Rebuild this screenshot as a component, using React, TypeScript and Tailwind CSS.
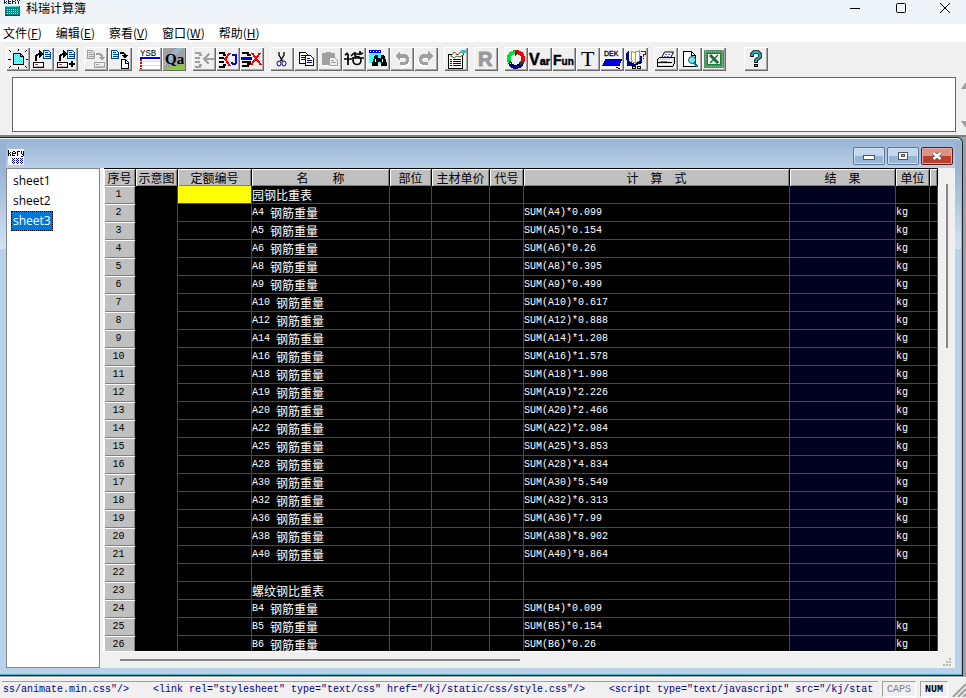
import { ReactNode, useState } from "react";

type Row = { code?: string; name?: string; formula?: string; unit?: string };

const steel = (code: string, factor: string, unit = "kg"): Row => ({
  code,
  name: "钢筋重量",
  formula: `SUM(${code})*${factor}`,
  unit,
});

const rows: Row[] = [
  { name: "园钢比重表" },
  steel("A4", "0.099"),
  steel("A5", "0.154"),
  steel("A6", "0.26"),
  steel("A8", "0.395"),
  steel("A9", "0.499"),
  steel("A10", "0.617"),
  steel("A12", "0.888"),
  steel("A14", "1.208"),
  steel("A16", "1.578"),
  steel("A18", "1.998"),
  steel("A19", "2.226"),
  steel("A20", "2.466"),
  steel("A22", "2.984"),
  steel("A25", "3.853"),
  steel("A28", "4.834"),
  steel("A30", "5.549"),
  steel("A32", "6.313"),
  steel("A36", "7.99"),
  steel("A38", "8.902"),
  steel("A40", "9.864"),
  {},
  { name: "螺纹钢比重表" },
  steel("B4", "0.099", ""),
  steel("B5", "0.154"),
  steel("B6", "0.26"),
];

const columns = [
  { title: "序号", width: "w-8" },
  { title: "示意图", width: "w-[42px]" },
  { title: "定额编号", width: "w-[74px]" },
  { title: "名　　称", width: "w-[138px]" },
  { title: "部位", width: "w-[42px]" },
  { title: "主材单价", width: "w-[58px]" },
  { title: "代号", width: "w-[34px]" },
  { title: "计　算　式", width: "" },
  { title: "结　果", width: "w-[106px]" },
  { title: "单位", width: "w-[34px]" },
  { title: "", width: "w-2" },
];

const menus = [
  ["文件", "F"],
  ["编辑", "E"],
  ["察看", "V"],
  ["窗口", "W"],
  ["帮助", "H"],
];

const Icon = ({ children }: { children: ReactNode }) => (
  <svg viewBox="0 0 24 24" className="block h-6 w-6" fill="none" shapeRendering="crispEdges" aria-hidden="true">
    {children}
  </svg>
);

const Drive = ({ x, y, off }: { x: number; y: number; off?: boolean }) => (
  <g>
    <rect x={x + 0.5} y={y + 0.5} width="10" height="5" fill={off ? "#eee" : "#fff"} stroke={off ? "#a0a0a0" : "#000"} />
    <path d={`M${x + 2} ${y + 2.5}h3`} stroke={off ? "#a0a0a0" : "#d33"} />
    <path d={`M${x + 2} ${y + 4.5}h8`} stroke="#bbb" />
  </g>
);

const BlueDoc = ({ x, y, off }: { x: number; y: number; off?: boolean }) => {
  const c = off ? "#a0a0a0" : "#0040a0";
  return (
    <g>
      <path d={`M${x + 0.5} ${y + 0.5}h5l2 2v6h-7z`} fill={off ? "#ddd" : "#bff"} stroke={c} />
      <path d={`M${x + 2} ${y + 2.5}h3M${x + 2} ${y + 4.5}h5M${x + 2} ${y + 6.5}h5`} stroke={c} />
    </g>
  );
};

const Undo = () => (
  <>
    <path d="M7 10h7c6 0 6 9 0 9h-3" stroke="#fff" strokeWidth="3" />
    <path d="M5 9l5-5v3h4c7 0 7 11 0 11h-4v-3h4c3 0 3-4 0-4h-4v3z" fill="#a0a0a0" />
  </>
);

const ExprLines = ({ off }: { off?: boolean }) => (
  <path
    d="M3 5.500h5v2h2M3 10.500h5M3 14.500h5M3 19.500h5v-2h2"
    stroke={off ? "#a0a0a0" : "#000"}
    strokeWidth="2"
  />
);

const icons: Record<string, ReactNode> = {
  fresh: (
    <>
      <path d="M7.500 6.500h7l3 3v8h-10z" fill="#6ff" stroke="#000" />
      <path d="M9 8.500h5M9 10.500h7M9 12.500h7M9 14.500h7" stroke="#5cc" strokeDasharray="1 1" />
      <path d="M14.500 6v3.500h3" stroke="#000" />
      <path d="M3 3l2 2M12.500 2v2M21 3l-2 2M2 12.500h3M20 12.500h2M3 21l2-2M12.500 20v2M21 21l-2-2" stroke="#000" />
    </>
  ),
  open: (
    <>
      <path d="M6 14v-3c0-2 1-4 4-4" stroke="#000" strokeWidth="2" />
      <path d="M9 3l4 4-4 4z" fill="#000" />
      <BlueDoc x={13} y={3} />
      <Drive x={3} y={15} />
    </>
  ),
  append: (
    <>
      <path d="M6 14v-3c0-2 1-4 4-4" stroke="#000" strokeWidth="2" />
      <path d="M9 3l4 4-4 4z" fill="#000" />
      <BlueDoc x={13} y={3} />
      <Drive x={3} y={15} />
      <path d="M15 17h6M18 14v6" stroke="#000" strokeWidth="2" />
    </>
  ),
  save: (
    <>
      <BlueDoc x={3} y={3} off />
      <path d="M12 7h3c2 0 3 1 3 4" stroke="#a0a0a0" strokeWidth="2" />
      <path d="M14 10h7l-3 4z" fill="#a0a0a0" />
      <Drive x={10} y={15} off />
    </>
  ),
  saveAs: (
    <>
      <BlueDoc x={3} y={3} />
      <path d="M12 6h2c2 0 3 1 3 3" stroke="#000" strokeWidth="2" />
      <path d="M13 8h7l-3 4z" fill="#000" />
      <path d="M13.500 12.500h4l3 3v6h-7z" fill="#fff" stroke="#000" />
      <path d="M17 13v3h3" stroke="#000" />
    </>
  ),
  ysb: (
    <>
      <path d="M1 1h21v21H1z" fill="#fff" />
      <text x="2" y="9" fontFamily="Liberation Mono, monospace" fontSize="9" fill="#000">YSB</text>
      <path d="M2 11h20" stroke="#00c" strokeWidth="2" />
      <path d="M2 14.500h20M2 18.500h20" stroke="#ddd" />
      <path d="M3 12v10" stroke="#d00" strokeWidth="2" strokeDasharray="2 1" />
    </>
  ),
  qa: (
    <>
      <path d="M1 1h21v21H1z" fill="#a0a0a4" />
      <path d="M1 20V14L14 1h8z" fill="#9bc4e2" opacity=".6" />
      <path d="M1 22l9-3 6 0 6-4v7z" fill="#8cc63f" />
      <text x="3" y="17" fontFamily="Liberation Serif, serif" fontWeight="700" fontSize="15" fill="#000">Qa</text>
    </>
  ),
  insert: (
    <>
      <ExprLines off />
      <path d="M12 12h10M17 7l-5 5 5 5" stroke="#a0a0a0" strokeWidth="2" />
    </>
  ),
  join: (
    <>
      <ExprLines />
      <path d="M14 6l-5 6 5 7" stroke="#e00" strokeWidth="2" />
      <path d="M16 8h4v7c0 3-4 3-4 0" stroke="#00d" strokeWidth="2" />
    </>
  ),
  remove: (
    <>
      <path d="M2 6h6v2h3M2 19h6v-2h3M2 15h9" stroke="#000" strokeWidth="2" />
      <path d="M1 11.500h11" stroke="#00d" strokeWidth="3" />
      <path d="M12 6l9 12M20 6l-9 12" stroke="#e00" strokeWidth="2" />
    </>
  ),
  cut: (
    <>
      <path d="M9 5v3l3.500 6M14 5v3l-3.500 6" stroke="#000" shapeRendering="auto" strokeWidth="1.300" />
      <ellipse cx="9" cy="16.500" rx="2" ry="2.500" stroke="#000080" shapeRendering="auto" />
      <ellipse cx="14" cy="16.500" rx="2" ry="2.500" stroke="#000080" shapeRendering="auto" />
    </>
  ),
  copy: (
    <>
      <path d="M5.500 5.500h6l3 3v8h-9z" fill="#fff" stroke="#000" />
      <path d="M7 8.500h4M7 10.500h4M7 12.500h4" stroke="#000" />
      <path d="M11.500 8.500h5l3 3v7h-8z" fill="#fff" stroke="#000080" />
      <path d="M13 11.500h3M13 13.500h5M13 15.500h5" stroke="#000080" />
    </>
  ),
  paste: (
    <>
      <path d="M4 6h4V5h5v1h4v5h-5v7H4z" fill="#a0a0a0" />
      <path d="M11.500 10.500h5l3 3v5h-8z" fill="#eee" stroke="#a0a0a0" />
      <path d="M13 13.500h3M13 15.500h5" stroke="#a0a0a0" />
      <path d="M5 18.500h6M12 19.500h9" stroke="#fff" />
    </>
  ),
  symbols: (
    <g shapeRendering="auto">
      <path d="M3 8l3-2M2 12h8M6 7v11M9 9l3-3M12 7h8M13 5v4M18 4v3l3-1M10 11h12" stroke="#000" strokeWidth="1.700" />
      <circle cx="15" cy="13.500" r="4" stroke="#000" strokeWidth="1.700" />
    </g>
  ),
  find: (
    <>
      <path d="M3 3h12v13H3z" fill="#3ff" />
      <path d="M3 4.500h12" stroke="#00c" strokeWidth="3" />
      <path d="M4 4.500h11" stroke="#fff" strokeDasharray="1 2" />
      <path d="M9 8h3v3h3V8h3l3 8v3h-6v-4h-3v4H6v-3z" fill="#000" />
      <path d="M9.500 12v3M16.500 12v3" stroke="#fff" />
    </>
  ),
  undo: <Undo />,
  redo: (
    <g transform="translate(24 0) scale(-1 1)">
      <Undo />
    </g>
  ),
  props: (
    <>
      <path d="M4.500 7.500h14v14h-14z" fill="#fff" stroke="#000" />
      <path d="M6 12.500h2M9 12.500h8M6 14.500h2M9 14.500h8M6 16.500h2M9 16.500h8M6 18.500h2M9 18.500h8" stroke="#000080" />
      <path d="M6.500 9l4-4 3 3 3-3h3v3l-4 2-3-1-2 2z" fill="#ffc" stroke="#000" shapeRendering="auto" strokeWidth=".7" />
      <path d="M17 3h5v3h-5z" fill="#3bd" />
    </>
  ),
  bigR: (
    <>
      <text x="5" y="20" fontFamily="Liberation Sans, sans-serif" fontWeight="700" fontSize="20" fill="#fff">R</text>
      <text x="4" y="19" fontFamily="Liberation Sans, sans-serif" fontWeight="700" fontSize="20" fill="#999" stroke="#999">R</text>
    </>
  ),
  cycle: (
    <g strokeWidth="4">
      <path d="M12 5a7 7 0 0 1 6 11" stroke="#e00" />
      <path d="M18 16a7 7 0 0 1-12 1" stroke="#000080" />
      <path d="M6 16A7 7 0 0 1 12 5" stroke="#0d3" />
      <path d="M11 3l3 3-3 3zM20 15l-3 4-2-4zM4 17l2-4 2 3z" fill="#333" strokeWidth="0" />
    </g>
  ),
  vars: (
    <text x="1" y="18" fontFamily="Liberation Sans, sans-serif" fontWeight="700" fill="#000" stroke="#000" strokeWidth=".5">
      <tspan fontSize="16">V</tspan>
      <tspan fontSize="11">ar</tspan>
    </text>
  ),
  funs: (
    <text x="1" y="18" fontFamily="Liberation Sans, sans-serif" fontWeight="700" fill="#000" stroke="#000" strokeWidth=".4">
      <tspan fontSize="14">F</tspan><tspan fontSize="10">un</tspan>
    </text>
  ),
  text: <text x="5" y="19" fontFamily="Liberation Serif, serif" fontSize="22" fill="#000">T</text>,
  dek: (
    <>
      <path d="M2 1h20v21H2z" fill="#f8f8f8" />
      <text x="4" y="9" fontFamily="Liberation Sans, sans-serif" fontSize="7" fill="#000" stroke="#000" strokeWidth=".3">DEK</text>
      <path d="M6 12h16l-3 6H3z" fill="#00d" stroke="#000080" />
      <path d="M3 18.500h17" stroke="#000" />
      <path d="M16 20.500h2M18 21.500h2" stroke="#000" />
    </>
  ),
  book: (
    <>
      <path d="M2 6l3-2v10l6 3 5-3V9h2v7l-7 3H3z" fill="#000080" />
      <path d="M7 4l4 2v10l-4-2z" fill="#ffc" stroke="#997" />
      <path d="M11 5l4-1v10l-4 2z" fill="#fff" stroke="#997" />
      <path d="M17 4.500h4v2.500h-2v3M19 11v1" stroke="#a00" />
      <circle cx="10" cy="20.500" r="1.500" stroke="#000" />
      <circle cx="15" cy="20.500" r="1.500" stroke="#000" />
    </>
  ),
  print: (
    <>
      <path d="M7.500 11l3-6h9l-3 6z" fill="#fff" stroke="#000" shapeRendering="auto" />
      <path d="M11 7.500h6M10 9.500h6" stroke="#66c" strokeDasharray="2 1" />
      <path d="M3.500 12.500l2-2h15v6l-2 3h-15z" fill="#ddd" stroke="#000" />
      <path d="M4 13.500h14M4 17.500h14" stroke="#fff" />
      <path d="M4 15.500h14" stroke="#000" />
      <path d="M7 14.500h6" stroke="#c44" />
    </>
  ),
  preview: (
    <>
      <path d="M5.500 4.500h8l4 4v11h-12z" fill="#fff" stroke="#000" />
      <path d="M13.500 4v4h4" stroke="#000" />
      <circle cx="14" cy="13" r="3.500" fill="#6ee" stroke="#357" shapeRendering="auto" />
      <path d="M16 16l4 4" stroke="#178" strokeWidth="2" />
    </>
  ),
  excel: (
    <>
      <path d="M2 3h20v18H2z" fill="#4f8a64" />
      <path d="M3.500 3v18M20.500 3v18" stroke="#9b9" strokeDasharray="1 1" />
      <path d="M3 4.500h18M3 19.500h18" stroke="#9b9" strokeDasharray="1 1" />
      <path d="M5.500 6.500h13v11h-13z" fill="#efe" stroke="#183" />
      <path d="M8 8l8 8" stroke="#264" strokeWidth="3" shapeRendering="auto" />
      <path d="M16 8l-8 8" stroke="#264" strokeWidth="1.500" shapeRendering="auto" />
    </>
  ),
  help: (
    <>
      <path d="M8 10V7l2-2h4l2 2v3l-4 3v3" stroke="#000" strokeWidth="3.500" shapeRendering="auto" />
      <path d="M8 9V7l2-2h4l2 2v3l-4 3v2" stroke="#1bc" strokeWidth="1.800" shapeRendering="auto" />
      <path d="M10.500 17.500h3v2h-3z" fill="#1bc" stroke="#000" />
    </>
  ),
};

const toolGroups: { id: string; label: string }[][] = [
  [
    { id: "fresh", label: "新建" },
    { id: "open", label: "打开" },
    { id: "append", label: "追加" },
  ],
  [
    { id: "save", label: "保存" },
    { id: "saveAs", label: "另存为" },
  ],
  [
    { id: "ysb", label: "预算表" },
    { id: "qa", label: "定额" },
  ],
  [
    { id: "insert", label: "插入行" },
    { id: "join", label: "合并行" },
    { id: "remove", label: "删除行" },
  ],
  [
    { id: "cut", label: "剪切" },
    { id: "copy", label: "复制" },
    { id: "paste", label: "粘贴" },
    { id: "symbols", label: "符号" },
    { id: "find", label: "查找" },
    { id: "undo", label: "撤消" },
    { id: "redo", label: "重做" },
  ],
  [{ id: "props", label: "属性" }],
  [{ id: "bigR", label: "结果" }],
  [
    { id: "cycle", label: "重算" },
    { id: "vars", label: "变量" },
    { id: "funs", label: "函数" },
    { id: "text", label: "文本" },
    { id: "dek", label: "定额库" },
    { id: "book", label: "手册" },
  ],
  [
    { id: "print", label: "打印" },
    { id: "preview", label: "打印预览" },
    { id: "excel", label: "导出" },
  ],
];

const ToolButton = ({ id, label }: { id: string; label: string }) => (
  <button
    type="button"
    aria-label={label}
    className="h-6 w-6 bg-[#f0f0f0] shadow-[inset_1px_1px_#fff,inset_-1px_-1px_#696969,inset_-2px_-2px_#a8a8a8]"
  >
    <Icon>{icons[id]}</Icon>
  </button>
);

const TitleBar = () => (
  <header className="flex h-6 shrink-0 items-start justify-between bg-[#eff4f9] pl-1">
    <div className="flex items-start gap-[6px]">
      <svg viewBox="0 0 16 16" className="h-4 w-4" shapeRendering="crispEdges" aria-hidden="true">
        <path d="M.5 0v4M1 2.500h1M2.500 1v1M2.500 3v1M4.500 0v4M5 1.500h2M5 3.500h2M8.500 0v4M9 1.500h2M11.500 0v1M11.500 2v2M13.500 0v1M15.500 0v1M14.500 1v3" stroke="#223" fill="none" />
        <path d="M1 6h15v10H1z" fill="#088" />
        <path d="M1 6h14v1H1z" fill="#4dd" />
        <path d="M3 9.500h12M3 11.500h12M3 13.500h12" stroke="#5ff" strokeDasharray="1 1" />
        <path d="M1 15h15v1H1z" fill="#044" />
      </svg>
      <h1 className="text-[12px] leading-4">科瑞计算簿</h1>
    </div>
    <div className="flex h-4">
      <button type="button" aria-label="最小化" className="flex w-[46px] items-center justify-center">
        <svg viewBox="0 0 10 10" className="h-[10px] w-[10px]" stroke="#000"><path d="M0 5.500h10" /></svg>
      </button>
      <button type="button" aria-label="最大化" className="flex w-[46px] items-center justify-center">
        <svg viewBox="0 0 10 10" className="h-[10px] w-[10px]" stroke="#000" fill="none"><rect x=".5" y=".5" width="9" height="9" rx="1" /></svg>
      </button>
      <button type="button" aria-label="关闭" className="flex w-[42px] items-center justify-center">
        <svg viewBox="0 0 10 10" className="h-[10px] w-[10px]" stroke="#000"><path d="M0 0l10 10M10 0L0 10" /></svg>
      </button>
    </div>
  </header>
);

const ChildTitleBar = () => (
  <div className="flex h-[29px] shrink-0 items-end justify-between bg-linear-to-b from-[#99b4d3] to-[#b7d1ea] pr-[2px] pb-[3px] pl-[2px]">
    <svg viewBox="0 0 16 16" className="h-4 w-4" shapeRendering="crispEdges" role="img" aria-label="kery">
      <path d="M0 0h16v16H0z" fill="#fff" />
      <path d="M.5 1v6M1 4.500h1M2.500 3v1M2.500 5v2M4.500 3v4M5 2.500h2M5 4.500h2M7.500 3v2M5 6.500h2M9.500 2v5M10 2.500h2M13.500 2v3M15.500 2v5M14 5.500h1M13 7.500h2" stroke="#000" fill="none" />
      <path d="M4 9.500h11M4 11.500h11M4 13.500h11" stroke="#00a" strokeDasharray="1 1" />
      <path d="M5 10.500h10M5 12.500h10M5 14.500h10" stroke="#00a" strokeDasharray="1 3" />
    </svg>
    <div className="flex gap-[2px]">
      <button type="button" aria-label="最小化窗口" className="flex h-[18px] w-8 items-center justify-center rounded-[2px] border border-[#58759a] bg-linear-to-b from-[#c3d8ed] from-50% to-[#98b5d4] to-50% shadow-[inset_0_0_0_1px_#cfe0f2]">
        <svg viewBox="0 0 12 6" className="mt-1 h-[6px] w-3" shapeRendering="crispEdges"><rect x=".5" y=".5" width="11" height="4" fill="#fff" stroke="#555" /></svg>
      </button>
      <button type="button" aria-label="最大化窗口" className="flex h-[18px] w-8 items-center justify-center rounded-[2px] border border-[#58759a] bg-linear-to-b from-[#c3d8ed] from-50% to-[#98b5d4] to-50% shadow-[inset_0_0_0_1px_#cfe0f2]">
        <svg viewBox="0 0 12 8" className="h-2 w-3" fill="#fff" stroke="#555" shapeRendering="crispEdges"><rect x="1.500" y=".5" width="9" height="7" /><rect x="4.500" y="2.500" width="3" height="2" fill="#9bd" /></svg>
      </button>
      <button type="button" aria-label="关闭窗口" className="flex h-[18px] w-8 items-center justify-center rounded-[2px] border border-[#5c1d18] bg-linear-to-b from-[#dd9384] from-50% to-[#b8402d] to-50% shadow-[inset_0_0_0_1px_#e5aa9d]">
        <svg viewBox="0 0 12 10" className="h-[10px] w-3"><path d="M2.500 2l7 6M9.500 2l-7 6" stroke="#555" strokeWidth="4" /><path d="M2.500 2l7 6M9.500 2l-7 6" stroke="#fff" strokeWidth="2.500" /></svg>
      </button>
    </div>
  </div>
);

const cell = "border-r border-b border-[#484848] p-0";
const cellText = "flex h-[17px] items-center overflow-hidden whitespace-pre leading-[17px]";
const mono = "font-['Liberation_Mono',monospace] text-[10px]";

const Sheet = () => (
  <table className="w-full table-fixed border-separate border-spacing-0 bg-black text-[12px] text-white">
    <thead>
      <tr>
        {columns.map((col, i) => (
          <th
            key={i}
            scope="col"
            className={`${col.width} h-[18px] border-t border-r border-black bg-[#c0c0c0] p-0 text-center leading-[17px] font-normal whitespace-nowrap text-black shadow-[inset_1px_1px_#fff,inset_-1px_-1px_#808080]`}
          >
            {col.title}
          </th>
        ))}
      </tr>
    </thead>
    <tbody>
      {rows.map((row, i) => (
        <tr key={i}>
          <th
            scope="row"
            className={`${mono} h-[18px] border-r border-black bg-[#c0c0c0] p-0 pr-[2px] text-center leading-[18px] font-normal text-black shadow-[inset_1px_1px_#fff,inset_-1px_-1px_#808080]`}
          >
            {i + 1}
          </th>
          <td className="border-r border-[#484848] p-0" />
          <td className={i === 0 ? `${cell} bg-[#ffff00]` : cell} />
          <td className={cell}>
            <div className={cellText}>
              {row.code && <span className={mono}>{row.code + " "}</span>}
              {row.name}
            </div>
          </td>
          <td className={cell} />
          <td className={cell} />
          <td className={cell} />
          <td className={cell}>
            <div className={`${cellText} ${mono}`}>{row.formula}</div>
          </td>
          <td className={`${cell} bg-[#000020]`} />
          <td className={cell}>
            <div className={`${cellText} ${mono}`}>{row.unit}</div>
          </td>
          <td className={cell} />
        </tr>
      ))}
    </tbody>
  </table>
);

const App = () => {
  const [active, setActive] = useState("sheet3");
  const [expression, setExpression] = useState("");

  return (
    <div className="flex h-screen flex-col overflow-hidden bg-[#f0f0f0] font-['Noto_Sans_CJK_SC',sans-serif] text-[12px] text-black">
      <TitleBar />

      <nav className="flex h-[18px] shrink-0 gap-[14px] bg-white pl-[3px]">
        {menus.map(([name, key]) => (
          <button key={key} type="button" className="leading-[18px] whitespace-nowrap">
            {name}(<u>{key}</u>)
          </button>
        ))}
      </nav>

      <div role="toolbar" className="flex shrink-0 gap-[6px] px-[6px] pt-[5px] pb-[6px]">
        {toolGroups.map((group, i) => (
          <div key={i} className="flex">
            {group.map((tool) => (
              <ToolButton key={tool.id} {...tool} />
            ))}
          </div>
        ))}
        <div className="ml-3 flex">
          <ToolButton id="help" label="帮助" />
        </div>
      </div>

      <div className="flex shrink-0 pb-[3px] pl-3">
        <textarea
          aria-label="计算式"
          value={expression}
          onChange={(e) => setExpression(e.target.value)}
          className="block h-[55px] flex-1 resize-none border border-[#646464] bg-white px-1 outline-none"
        />
        <svg viewBox="0 0 5 55" className="ml-[5px] h-[55px] w-[5px]" fill="#a0a0a0" aria-hidden="true">
          <path d="M0 12l4-6h1v6zM0 44h5v6H4z" />
        </svg>
      </div>

      <main className="flex min-h-0 flex-1 border-t-2 border-[#808080] bg-[#a0a0a0] pr-[3px] pb-px">
        <section className="flex min-w-0 flex-1 flex-col rounded-tr-md border-t border-r border-b border-[#222] bg-[#b9d1ea]">
          <div className="flex min-h-0 flex-1 flex-col rounded-tr-md border-t border-r border-b border-t-[#e8f3fc] border-r-[#5fd3ee] border-b-[#4fb5c8] bg-[linear-gradient(#99b4d3_30px,#d3e3f3_110px,#b9d1ea_110px)] pr-[6px] pb-[6px] pl-[6px]">
            <ChildTitleBar />
            <div className="flex min-h-0 flex-1 bg-[#f0f0f0]">
              <ul className="w-[94px] shrink-0 border border-[#828790] bg-white py-[2px] pl-1 font-['Open_Sans',sans-serif] text-[12px]">
                {["sheet1", "sheet2", "sheet3"].map((name) => (
                  <li key={name} className="flex h-5">
                    <button
                      type="button"
                      onClick={() => setActive(name)}
                      className={
                        name === active
                          ? "border border-dotted border-black bg-[#0078d7] px-px text-white"
                          : "border border-transparent px-px"
                      }
                    >
                      {name}
                    </button>
                  </li>
                ))}
              </ul>
              <div className="flex min-w-0 flex-1 flex-col pl-[3px]">
                <div className="flex min-h-0 flex-1">
                  <div className="min-w-0 flex-1 overflow-hidden border-b border-l border-white">
                    <Sheet />
                  </div>
                  <div className="flex w-[17px] justify-center pt-4">
                    <div className="h-[164px] w-[2px] bg-[#858585]" />
                  </div>
                </div>
                <div className="flex h-4 shrink-0 items-center justify-between pl-[17px]">
                  <div className="h-[2px] w-[400px] bg-[#858585]" />
                  <svg viewBox="0 0 9 9" className="mt-1 mr-[3px] h-[9px] w-[9px]" fill="#b8b8b8" aria-hidden="true">
                    <path d="M6 0h2v2H6zM3 3h2v2H3zM6 3h2v2H6zM0 6h2v2H0zM3 6h2v2H3zM6 6h2v2H6z" />
                  </svg>
                </div>
              </div>
            </div>
          </div>
        </section>
      </main>

      <footer className="flex h-[21px] shrink-0 gap-1 border-t border-white pt-[3px] font-['Liberation_Mono',monospace] text-[10px] leading-[15px]">
        <p className="ml-[2px] min-w-0 flex-1 overflow-hidden border-t border-[#a0a0a0] pl-px whitespace-pre text-[#000080]">
          {`ss/animate.min.css"/>    <link rel="stylesheet" type="text/css" href="/kj/static/css/style.css"/>    <script type="text/javascript" src="/kj/stat`}
        </p>
        <span className="h-4 w-[34px] border border-[#a0a0a0] border-r-white border-b-white text-center text-[#808080]">CAPS</span>
        <span className="h-4 w-7 border border-[#a0a0a0] border-r-white border-b-white text-center font-bold">NUM</span>
        <svg viewBox="0 0 14 16" className="h-4 w-[14px]" stroke="#a0a0a0" strokeWidth="2" aria-hidden="true">
          <path d="M1 16L14 3M6 16l8-8M11 16l3-3" />
        </svg>
      </footer>
    </div>
  );
};

export default App;
